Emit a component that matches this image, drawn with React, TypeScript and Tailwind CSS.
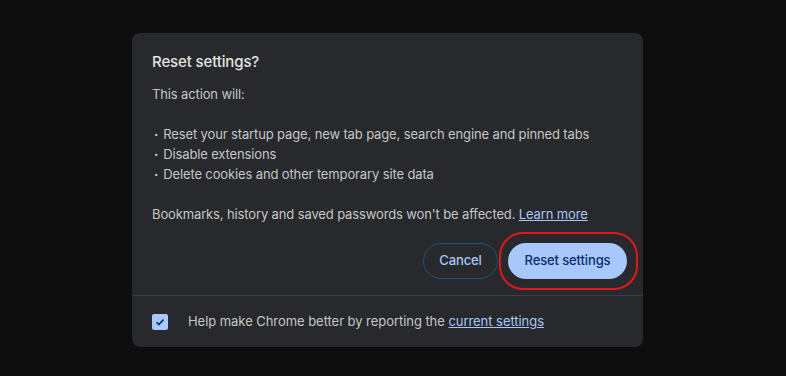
import React from "react";

const ResetDialog: React.FC = () => {
    return (
        <div className="relative ml-[132px] mt-[33px] w-[511px] rounded-lg bg-[#28292c] text-[13px] tracking-[-0.13px] text-[#c4c7c5]">
            <div className="px-5 pt-[19px]">
                <h2 className="text-[15px] leading-5 font-medium text-[#e3e3e3]">
                    Reset settings?
                </h2>
                <div className="mt-[12px] leading-5">
                    <p>This action will:</p>
                    <ul className="mt-5">
                        <li>
                            <span className="ml-[2px] mr-[5px] font-bold">·</span>Reset your startup page, new tab page, search engine and pinned tabs
                        </li>
                        <li>
                            <span className="ml-[2px] mr-[5px] font-bold">·</span>Disable extensions
                        </li>
                        <li>
                            <span className="ml-[2px] mr-[5px] font-bold">·</span>Delete cookies and other temporary site data
                        </li>
                    </ul>
                    <p className="mt-5">
                        Bookmarks, history and saved passwords won't be affected.{" "}
                        <a href="#" className="text-[#a8c7fa] underline">
                            Learn more
                        </a>
                    </p>
                </div>
            </div>
            <div className="mt-[19px] flex justify-end gap-[10px] pr-4 pb-4">
                <button className="h-9 w-[75px] rounded-full border border-[#17577e] font-medium text-[#a8c7fa]">
                    Cancel
                </button>
                <div className="relative">
                    <button className="h-9 w-[119px] rounded-full bg-[#a8c7fa] font-medium text-[#062e6f]">
                        Reset settings
                    </button>
                    {/* highlight ring drawn over the screenshot */}
                    <div className="pointer-events-none absolute -top-[11px] -bottom-[11px] -left-[9px] -right-[11px] rounded-[24px] border-2 border-[#e3171b]" />
                </div>
            </div>
            <div className="flex h-[52px] items-center gap-5 border-t border-[#3c3d40] px-5">
                <span className="flex h-4 w-4 items-center justify-center rounded-[2px] bg-[#a8c7fa]">
                    <svg width="12" height="12" viewBox="0 0 12 12" fill="none">
                        <path d="M2.5 6.2l2.3 2.3 4.7-4.9" stroke="#062e6f" strokeWidth="1.6" />
                    </svg>
                </span>
                <span className="tracking-[-0.05px]">
                    Help make Chrome better by reporting the{" "}
                    <a href="#" className="text-[#a8c7fa] underline">
                        current settings
                    </a>
                </span>
            </div>
        </div>
    );
};

export default function App() {
    return (
        <div className="h-[376px] w-[786px] overflow-hidden bg-[#0e0e0e] font-['Inter','Liberation_Sans',sans-serif]">
            <ResetDialog />
        </div>
    );
}
